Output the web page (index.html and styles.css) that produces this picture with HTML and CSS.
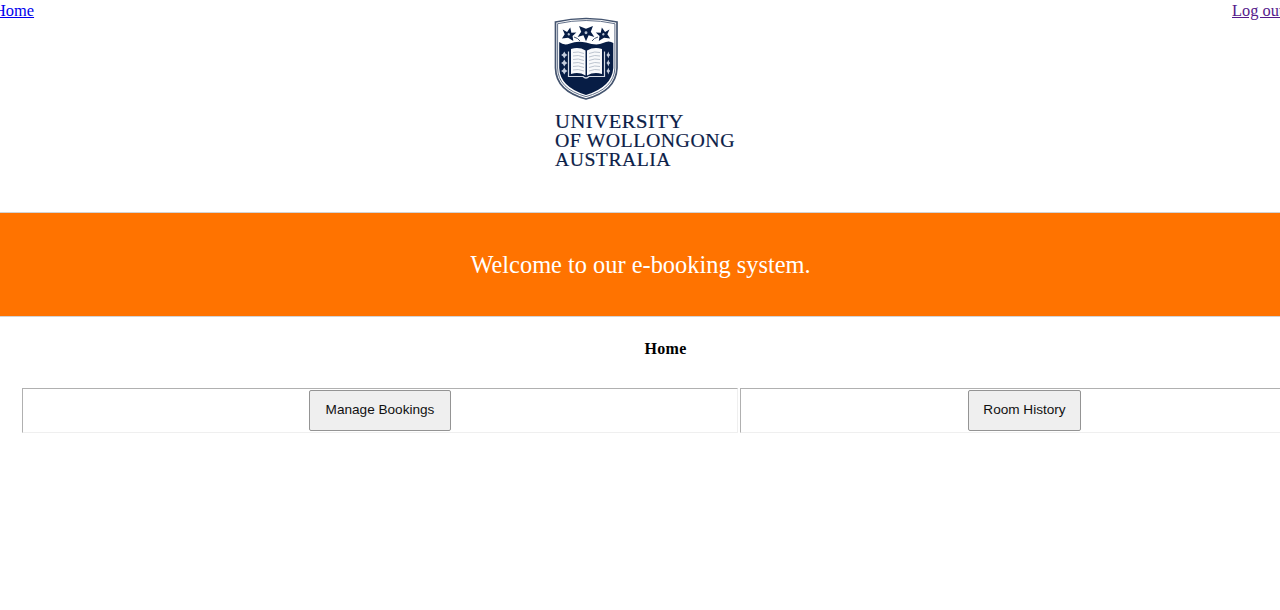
FILE: index.html
```html
<!DOCTYPE html>
<html lang="en">
<head>
<meta charset="utf-8">
<title>Home</title>
<link rel="stylesheet" href="styles.css">
</head>
<body>
<header class="header">
  <a class="nav-link nav-home" href="#">Home</a>
  <svg class="logo" width="190" height="160" viewBox="550 14 190 160" role="img" aria-label="University of Wollongong Australia">
    <defs>
      <g id="flower">
        <path d="M0-7 2.2-2 7-3.4 4 .8 5.8 5.6 0 3.4-5.8 5.6-4 .8-7-3.4-2.2-2Z"/>
        <circle r="1.2" fill="#b9c3d2"/>
      </g>
      <g id="charge">
        <path d="M0-3.6 1.3-1.3 3.2 0 1.3 1.3 0 3.6-1.3 1.3-3.2 0-1.3-1.3Z"/>
      </g>
    </defs>
    <path class="shield-edge" d="M555.5 22Q586 15 617 22V68Q616 91 586 99Q556 91 555.5 68Z"/>
    <path class="shield-line" d="M557.6 23.7Q586 17.3 614.9 23.7V68Q614 89 586 96.6Q558 89 557.6 68Z"/>
    <path class="navy" d="M559.2 42Q564 46 570 43.5Q577 40.5 586 42.5Q597 46 603 43Q609 40 613.3 43V68Q612 87 586 95Q560 87 559.2 68Z"/>
    <g class="navy">
      <use href="#flower" transform="translate(568.8 34.3) rotate(12)"/>
      <use href="#flower" transform="translate(586 32.8) rotate(180) scale(1.2)"/>
      <use href="#flower" transform="translate(603.3 34.3) rotate(-12)"/>
      <path class="stem" d="M574 37Q578 38 580 41M598 37Q594 38 592 41"/>
    </g>
    <g class="charges">
      <use href="#charge" x="564.3" y="55"/><use href="#charge" x="564.3" y="63"/><use href="#charge" x="564.3" y="71"/>
      <use href="#charge" transform="translate(608.3 55) scale(.6 1)"/><use href="#charge" transform="translate(608.3 63) scale(.6 1)"/><use href="#charge" transform="translate(608.3 71) scale(.6 1)"/>
    </g>
    <path class="book" d="M568.5 51.5V76.5H583Q586 79.5 589 76.5H604.5V51.5"/>
    <path class="page" d="M571 49Q579 46.5 585.5 50.5V75.5Q579 71.5 571 74ZM602 49Q594 46.5 587 50.5V75.5Q594 71.5 602 74Z"/>
    <path class="print" d="M573 52.5Q578 51 584 53.5M573 56Q578 54.5 584 57M573 59.5Q578 58 584 60.5M573 63Q578 61.5 584 64M573 66.5Q578 65 584 67.5M573 70Q578 68.5 584 71M600 52.5Q595 51 589 53.5M600 56Q595 54.5 589 57M600 59.5Q595 58 589 60.5M600 63Q595 61.5 589 64M600 66.5Q595 65 589 67.5M600 70Q595 68.5 589 71"/>
    <g class="wordmark">
      <text x="555" y="127.5" textLength="129" lengthAdjust="spacingAndGlyphs">UNIVERSITY</text>
      <text x="555" y="147" textLength="180" lengthAdjust="spacingAndGlyphs">OF WOLLONGONG</text>
      <text x="555" y="166.3" textLength="116" lengthAdjust="spacingAndGlyphs">AUSTRALIA</text>
    </g>
  </svg>
  <a class="nav-link nav-logout" href="#">Log out</a>
</header>
<section class="banner">Welcome to our e-booking system.</section>
<main class="content">
  <h1 class="title">Home</h1>
  <div class="actions">
    <div class="cell"><button class="action manage">Manage Bookings</button></div>
    <div class="cell"><button class="action history">Room History</button></div>
  </div>
</main>
</body>
</html>
```
FILE: styles.css
```css
body {
  margin: 0;
  background: #fff;
  color: #000;
  font-family: "Liberation Serif", "Times New Roman", serif;
  overflow: hidden;
}
.header {
  display: flex;
  justify-content: space-between;
  height: 212px;
}
.nav-link {
  width: 48px;
  padding-top: 1px;
  font-size: 16.4px;
  line-height: 20px;
  white-space: nowrap;
}
.nav-home { color: #0000ee; text-indent: -6px; }
.nav-logout { color: #551a8b; }
.logo { margin: 14px 0 0 10px; }
.navy { fill: #071d45; }
.shield-edge { fill: #fff; stroke: #44546f; stroke-width: 1.7; }
.shield-line { fill: none; stroke: #63718a; stroke-width: 1; }
.stem { fill: none; stroke: #44546f; stroke-width: 1; }
.charges { fill: #c5cddd; }
.book { fill: #071d45; stroke: #d4dae4; stroke-width: 1.2; }
.page { fill: #f8f9fb; }
.print { fill: none; stroke: #b4bdca; stroke-width: .9; }
.wordmark {
  fill: #0b2048;
  stroke: #0b2048;
  stroke-width: .2;
  font-size: 19px;
  letter-spacing: .5px;
}
.banner {
  box-sizing: border-box;
  height: 105px;
  border: solid #d3d3d3;
  border-width: 1px 0;
  background: #ff7300;
  color: #fff;
  font-size: 24.4px;
  line-height: 103px;
  text-align: center;
  padding-left: 1px;
}
.content {
  width: 1287px;
  margin-left: 22px;
}
.title {
  margin: 0;
  padding-top: 22px;
  height: 49px;
  font-size: 16px;
  line-height: 20px;
  letter-spacing: .3px;
  text-align: center;
}
.actions {
  display: grid;
  grid-template-columns: 716px 569px;
  gap: 2px;
}
.cell {
  box-sizing: border-box;
  height: 45px;
  padding-top: 1px;
  border: 1px solid;
  border-color: #b0b0b0 #efefef #efefef #b0b0b0;
  text-align: center;
}
.action {
  height: 41px;
  padding: 0 0 2px;
  border: 1px solid #949494;
  border-radius: 2px;
  background: #efefef;
  color: #111;
  font: 13.6px "Liberation Sans", Arial, sans-serif;
}
.manage { width: 142px; }
.history { width: 113px; }
```
